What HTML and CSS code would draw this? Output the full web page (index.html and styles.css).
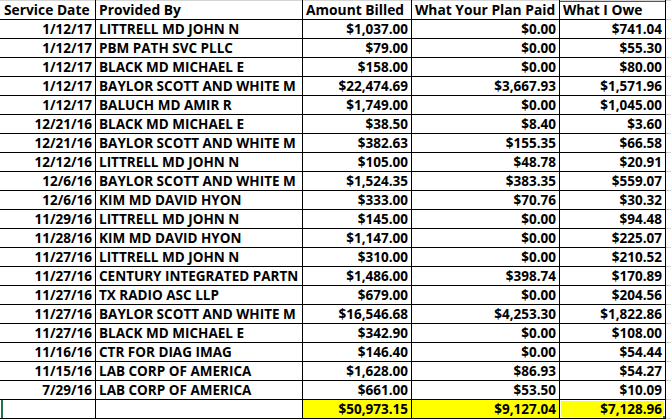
FILE: index.html
```html
<!DOCTYPE html>
<html>
<head>
<meta charset="utf-8">
<link rel="stylesheet" href="styles.css">
</head>
<body>
<table class="sheet">
  <colgroup>
    <col class="c-date"><col class="c-prov"><col class="c-bill"><col class="c-paid"><col class="c-owe"><col class="c-extra">
  </colgroup>
  <thead>
    <tr class="head">
      <th class="l">Service Date</th>
      <th class="l">Provided By</th>
      <th class="l">Amount Billed</th>
      <th class="l">What Your Plan Paid</th>
      <th class="l sel-col">What I Owe</th>
      <th class="grid"></th>
    </tr>
  </thead>
  <tbody>
    <tr><td class="r">1/12/17</td><td>LITTRELL MD JOHN N</td><td class="r">$1,037.00</td><td class="r">$0.00</td><td class="r">$741.04</td><td class="grid"></td></tr>
    <tr><td class="r">1/12/17</td><td>PBM PATH SVC PLLC</td><td class="r">$79.00</td><td class="r">$0.00</td><td class="r">$55.30</td><td class="grid"></td></tr>
    <tr><td class="r">1/12/17</td><td>BLACK MD MICHAEL E</td><td class="r">$158.00</td><td class="r">$0.00</td><td class="r">$80.00</td><td class="grid"></td></tr>
    <tr><td class="r">1/12/17</td><td>BAYLOR SCOTT AND WHITE M</td><td class="r">$22,474.69</td><td class="r">$3,667.93</td><td class="r">$1,571.96</td><td class="grid"></td></tr>
    <tr><td class="r">1/12/17</td><td>BALUCH MD AMIR R</td><td class="r">$1,749.00</td><td class="r">$0.00</td><td class="r">$1,045.00</td><td class="grid"></td></tr>
    <tr><td class="r">12/21/16</td><td>BLACK MD MICHAEL E</td><td class="r">$38.50</td><td class="r">$8.40</td><td class="r">$3.60</td><td class="grid"></td></tr>
    <tr><td class="r">12/21/16</td><td>BAYLOR SCOTT AND WHITE M</td><td class="r">$382.63</td><td class="r">$155.35</td><td class="r">$66.58</td><td class="grid"></td></tr>
    <tr><td class="r">12/12/16</td><td>LITTRELL MD JOHN N</td><td class="r">$105.00</td><td class="r">$48.78</td><td class="r">$20.91</td><td class="grid"></td></tr>
    <tr><td class="r">12/6/16</td><td>BAYLOR SCOTT AND WHITE M</td><td class="r">$1,524.35</td><td class="r">$383.35</td><td class="r">$559.07</td><td class="grid"></td></tr>
    <tr><td class="r">12/6/16</td><td>KIM MD DAVID HYON</td><td class="r">$333.00</td><td class="r">$70.76</td><td class="r">$30.32</td><td class="grid"></td></tr>
    <tr><td class="r">11/29/16</td><td>LITTRELL MD JOHN N</td><td class="r">$145.00</td><td class="r">$0.00</td><td class="r">$94.48</td><td class="grid"></td></tr>
    <tr><td class="r">11/28/16</td><td>KIM MD DAVID HYON</td><td class="r">$1,147.00</td><td class="r">$0.00</td><td class="r">$225.07</td><td class="grid"></td></tr>
    <tr><td class="r">11/27/16</td><td>LITTRELL MD JOHN N</td><td class="r">$310.00</td><td class="r">$0.00</td><td class="r">$210.52</td><td class="grid"></td></tr>
    <tr><td class="r">11/27/16</td><td>CENTURY INTEGRATED PARTN</td><td class="r">$1,486.00</td><td class="r">$398.74</td><td class="r">$170.89</td><td class="grid"></td></tr>
    <tr><td class="r">11/27/16</td><td>TX RADIO ASC LLP</td><td class="r">$679.00</td><td class="r">$0.00</td><td class="r">$204.56</td><td class="grid"></td></tr>
    <tr><td class="r">11/27/16</td><td>BAYLOR SCOTT AND WHITE M</td><td class="r">$16,546.68</td><td class="r">$4,253.30</td><td class="r">$1,822.86</td><td class="grid"></td></tr>
    <tr><td class="r">11/27/16</td><td>BLACK MD MICHAEL E</td><td class="r">$342.90</td><td class="r">$0.00</td><td class="r">$108.00</td><td class="grid"></td></tr>
    <tr><td class="r">11/16/16</td><td>CTR FOR DIAG IMAG</td><td class="r">$146.40</td><td class="r">$0.00</td><td class="r">$54.44</td><td class="grid"></td></tr>
    <tr><td class="r">11/15/16</td><td>LAB CORP OF AMERICA</td><td class="r">$1,628.00</td><td class="r">$86.93</td><td class="r">$54.27</td><td class="grid"></td></tr>
    <tr><td class="r">7/29/16</td><td>LAB CORP OF AMERICA</td><td class="r">$661.00</td><td class="r">$53.50</td><td class="r">$10.09</td><td class="grid"></td></tr>
    <tr class="total">
      <td class="row-sel"></td><td></td>
      <td class="r yellow">$50,973.15</td>
      <td class="r yellow">$9,127.04</td>
      <td class="r yellow active">$7,128.96</td>
      <td class="grid"></td>
    </tr>
  </tbody>
</table>
</body>
</html>
```
FILE: styles.css
```css
html, body {
  margin: 0;
  padding: 0;
  background: #ffffff;
}

.sheet {
  border-collapse: collapse;
  table-layout: fixed;
  width: 680px;
  font-family: "Open Sans", "Noto Sans", sans-serif;
  font-weight: 700;
  font-size: 13.5px;
  color: #000000;
}

.c-date { width: 95px; }
.c-prov { width: 207px; }
.c-bill { width: 109px; }
.c-paid { width: 148px; }
.c-owe { width: 106px; }
.c-extra { width: 15px; }

.sheet th,
.sheet td {
  height: 18px;
  line-height: 18px;
  padding: 0 3px;
  border: 1px solid #000000;
  white-space: nowrap;
  overflow: hidden;
  vertical-align: bottom;
  font-weight: 700;
}

.sheet .head th {
  border-top: 1px solid #d4d4d4;
  text-align: left;
  font-size: 13.8px;
  padding: 0 2px 0 3px;
}

.sheet tr > *:first-child {
  border-left: 1px solid #ffffff;
}

.sheet .grid {
  border-color: #d4d4d4;
  border-left-color: #000000;
  border-right: none;
}

.sheet .head .grid {
  border-bottom-color: #d4d4d4;
}

.r { text-align: right; }
.l { text-align: left; }

.yellow { background: #ffff00; }

.sel-col {
  position: relative;
}
.sel-col::before {
  content: "";
  position: absolute;
  left: -1px;
  right: -1px;
  top: -1px;
  height: 2px;
  background: #217346;
}

.row-sel {
  position: relative;
}
.row-sel::before {
  content: "";
  position: absolute;
  left: -1px;
  top: 0;
  bottom: 0;
  width: 3px;
  background: #217346;
}

.active {
  position: relative;
}
.active::after {
  content: "";
  position: absolute;
  left: -2px;
  top: -2px;
  right: -2px;
  bottom: -2px;
  border: 2px solid #217346;
  box-shadow: inset 0 0 0 1px #ffffff;
  pointer-events: none;
}
.active::before {
  content: "";
  position: absolute;
  right: -4px;
  bottom: -4px;
  width: 5px;
  height: 5px;
  background: #217346;
  border: 1px solid #ffffff;
  z-index: 2;
}
```
